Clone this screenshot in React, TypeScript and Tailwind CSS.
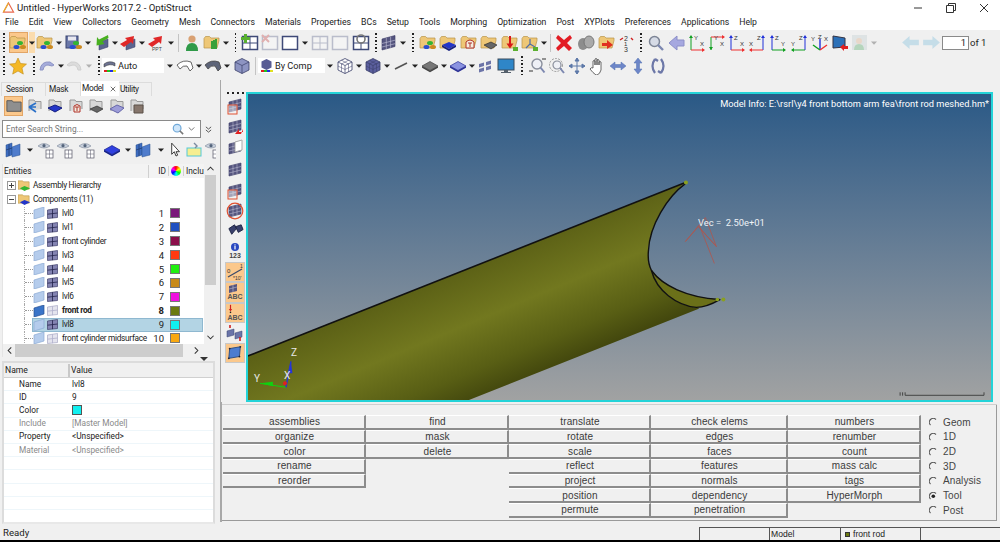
import React from "react";

// small helpers for the toolbar glyphs
const Grip = () => (
  <span className="flex flex-col gap-[2px] h-[19px] justify-center">
    {[0, 1, 2, 3, 4, 5].map((i) => (
      <i key={i} className="block w-[1.5px] h-[1.5px] bg-[#222]" />
    ))}
  </span>
);

const Caret = () => (
  <svg viewBox="0 0 6 4" className="w-[6px] h-[4px] shrink-0">
    <path d="M0 0.5h6L3 3.8z" fill="#222" />
  </svg>
);

const Sep = () => <span className="block w-px h-[18px] bg-[#c4c4c4]" />;

const Ic: React.FC<{ children: React.ReactNode; op?: boolean }> = ({ children, op }) => (
  <svg viewBox="0 0 18 18" className={op ? "w-[18px] h-[18px] shrink-0 opacity-30" : "w-[18px] h-[18px] shrink-0"}>
    {children}
  </svg>
);

const FolderShape = () => (
  <path d="M1 4.5V14h13l2-7.5V4H8L6.5 2.5H2.5z" fill="#eec777" stroke="#b79449" strokeWidth=".7" />
);

const Balls = () => (
  <>
    <ellipse cx="11" cy="9" rx="3" ry="2" fill="#33b533" />
    <ellipse cx="7.5" cy="13" rx="3" ry="2" fill="#2a4fd0" />
    <ellipse cx="14" cy="13" rx="3" ry="2" fill="#cc8a22" />
  </>
);

const FolderBalls = () => (
  <Ic>
    <FolderShape />
    <Balls />
  </Ic>
);

const FolderBlue = () => (
  <Ic>
    <FolderShape />
    <path d="M3 11l7-3 7 3-7 4z" fill="#2436c8" />
    <path d="M3 11v2l7 4 7-4v-2l-7 4z" fill="#141f80" />
  </Ic>
);

const FolderMark: React.FC<{ kind: string }> = ({ kind }) => (
  <Ic>
    <FolderShape />
    {kind === "clock" && <path d="M6 14V8q4-4 8 0v6zM8 9h4M10 9v4" fill="#f3ede0" stroke="#b03028" />}
    {kind === "gray" && <path d="M4 11l7-3 6 3-6 4z" fill="#666" stroke="#222" strokeWidth=".6" />}
    {kind === "down" && (
      <>
        <path d="M9 2v9" stroke="#d81818" strokeWidth="2" />
        <path d="M5.5 9.5h7L9 14.5z" fill="#d81818" />
        <rect x="12" y="13" width="5" height="4" fill="#5cb030" />
      </>
    )}
    {kind === "axis" && (
      <>
        <path d="M9 5v5l-4 4M9 10l5 3" stroke="#4e6ea8" strokeWidth="1.2" fill="none" />
        <rect x="12" y="13" width="5" height="4" fill="#5cb030" />
      </>
    )}
    {kind === "red" && <path d="M4 9h5V6l6 5-6 4v-3H4z" fill="#e03020" />}
    {kind === "color" && <path d="M8 7h2v8H8zM10 6h2v9h-2zM12 5h2v10h-2z" fill="#3aa03a" />}
  </Ic>
);

const MeshPanel: React.FC<{ op?: boolean }> = ({ op }) => (
  <Ic op={op}>
    <path d="M2 5l13-3.5v11L2 16z" fill="#55557f" stroke="#3b3b66" strokeWidth=".6" />
    <path d="M6.3 3.9v11M10.6 2.7v11M2 9.5l13-3.3M2 13l13-3.3" stroke="#c8c8dd" strokeWidth=".6" />
  </Ic>
);

const Arrow: React.FC<{ fill: string; ppt?: boolean; down?: boolean }> = ({ fill, ppt, down }) => (
  <Ic>
    {!ppt && <path d="M7 8l9-3v8l-9 3z" fill="#5b6490" stroke="#384068" strokeWidth=".5" />}
    {down ? (
      <path d="M16 1L7 5.5 5 3l-.5 8.5 8-1.5-2-2.5 6-3.5z" fill={fill} />
    ) : (
      <path d="M1 10l7-4-2-2 9-2-1 8-2-2-7 5z" fill={fill} />
    )}
    {ppt && (
      <text x="5" y="17" fontSize="5" fontFamily="Liberation Sans, sans-serif" fill="#444">
        PPT
      </text>
    )}
  </Ic>
);

const PanelBox: React.FC<{ op?: boolean; sym?: string }> = ({ op, sym }) => (
  <Ic op={op}>
    <rect x="1.5" y="2.5" width="15" height="13" fill="#fff" stroke="#3f4a78" strokeWidth="1.5" />
    {sym === "split" && <path d="M9 3v12M2 9h14" stroke="#3f4a78" />}
    {sym === "plus" && (
      <>
        <path d="M9 3v12M2 9h14" stroke="#3f4a78" />
        <path d="M3 0h3v3h3v3H6v3H3V6H0V3h3z" fill="#58b030" />
      </>
    )}
    {sym === "x" && <path d="M1 1l7 7M8 1l-7 7" stroke="#c02020" strokeWidth="2" />}
    {sym === "help" && (
      <>
        <path d="M9 9v7M2 9h14" stroke="#3f4a78" />
        <circle cx="9" cy="5" r="4" fill="none" stroke="#777" strokeWidth="1.6" />
      </>
    )}
  </Ic>
);

const AxisIcon: React.FC<{ v: string; h: string; vc: string; hc: string; flip?: boolean; down?: boolean }> = ({
  v,
  h,
  vc,
  hc,
  flip,
  down,
}) => {
  const x = flip ? 15 : 3;
  const x2 = flip ? 2 : 16;
  return (
    <svg viewBox="0 0 18 18" className="w-[18px] h-[18px] shrink-0">
      <path d={`M${x} ${down ? 3 : 16}V${down ? 16 : 3}`} stroke={vc} strokeWidth="1" />
      <path d={down ? `M${x - 2} 13h4l-2 3z` : `M${x - 2} 4h4l-2-3z`} fill={vc} />
      <path d={`M${x} ${down ? 3 : 16}H${x2}`} stroke={hc} strokeWidth="1" />
      <path d={flip ? `M4 ${down ? 1 : 14}v4l-3-2z` : `M14 ${down ? 1 : 14}v4l3-2z`} fill={hc} />
      <text x={flip ? 9 : 6} y="6" fontSize="6" fontFamily="Liberation Sans, sans-serif" fill="#333">
        {v}
      </text>
      <text x={flip ? 1 : 12} y="12" fontSize="6" fontFamily="Liberation Sans, sans-serif" fill="#333">
        {h}
      </text>
    </svg>
  );
};

const S: React.FC<{ w: string; children?: React.ReactNode }> = ({ w, children }) => (
  <span className={`${w} h-full shrink-0 flex items-center justify-center`}>{children}</span>
);

const Cube: React.FC<{ fill?: string; line?: boolean }> = ({ fill = "#7f88b8", line }) => (
  <Ic>
    <path d="M9 1.5l7 3.5v8l-7 3.5L2 13V5z" fill={fill} stroke="#3a3f68" strokeWidth=".8" />
    <path d="M2 5l7 3.5L16 5M9 8.5v8" fill="none" stroke="#3a3f68" strokeWidth=".7" />
    {line && <path d="M5.5 3.2L12.5 7M12.5 3.2L5.5 7M5.5 6.8v8M12.5 6.8v8M2 9l7 3.5L16 9" fill="none" stroke="#3a3f68" strokeWidth=".5" />}
  </Ic>
);

const Diamond: React.FC<{ fill: string; dark: string }> = ({ fill, dark }) => (
  <Ic>
    <path d="M1 9l8-4.5L17 9l-8 4.5z" fill={fill} stroke={dark} strokeWidth=".7" />
    <path d="M1 9v1.8l8 4.5 8-4.5V9l-8 4.5z" fill={dark} />
  </Ic>
);

const Shell: React.FC<{ fill: string }> = ({ fill }) => (
  <Ic>
    <path d="M1 8q6-6 14-3l2 6-3 3-3-5q-4-1-7 3z" fill={fill} stroke="#444" strokeWidth=".8" />
  </Ic>
);

const ToolRowOne = () => (
  <div className="h-[23px] flex items-center">
    <S w="w-[8px]"><Grip /></S>
    <S w="w-[20px]">
      <span className="w-[19px] h-[21px] bg-[#fbc88c] border border-[#e2a566] flex items-center justify-center">
        <FolderBalls />
      </span>
    </S>
    <S w="w-[8px]"><span className="w-[6px] h-[21px] bg-[#fbdcae] flex items-center justify-center"><Caret /></span></S>
    <S w="w-[18px]"><FolderBalls /></S>
    <S w="w-[10px]"><Caret /></S>
    <S w="w-[19px]">
      <Ic>
        <rect x="1" y="2" width="12" height="12" fill="#6b78a8" stroke="#3b4470" />
        <rect x="3" y="2.5" width="8" height="4" fill="#e8e8f0" />
        <Balls />
      </Ic>
    </S>
    <S w="w-[9px]"><Caret /></S>
    <S w="w-[18px]"><Arrow fill="#48b020" down /></S>
    <S w="w-[9px]"><Caret /></S>
    <S w="w-[18px]"><Arrow fill="#e02828" /></S>
    <S w="w-[10px]"><Caret /></S>
    <S w="w-[18px]"><Arrow fill="#e02828" ppt /></S>
    <S w="w-[11px]"><Caret /></S>
    <S w="w-[5px]"><Sep /></S>
    <S w="w-[22px]">
      <Ic>
        <circle cx="9" cy="5" r="3.6" fill="#d9a173" />
        <path d="M3 17q0-8 6-8t6 8z" fill="#2f9a48" />
      </Ic>
    </S>
    <S w="w-[18px]"><FolderMark kind="color" /></S>
    <S w="w-[10px]"><Caret /></S>
    <S w="w-[9px]"><Grip /></S>
    <S w="w-[20px]"><PanelBox sym="plus" /></S>
    <S w="w-[20px]"><PanelBox op sym="x" /></S>
    <S w="w-[20px]"><PanelBox /></S>
    <S w="w-[10px]"><Caret /></S>
    <S w="w-[20px]"><PanelBox op sym="split" /></S>
    <S w="w-[20px]"><PanelBox op /></S>
    <S w="w-[22px]"><PanelBox sym="help" /></S>
    <S w="w-[8px]"><Grip /></S>
    <S w="w-[18px]"><MeshPanel /></S>
    <S w="w-[10px]"><Caret /></S>
    <S w="w-[10px]"><Grip /></S>
    <S w="w-[20px]"><FolderBalls /></S>
    <S w="w-[20px]"><FolderBlue /></S>
    <S w="w-[21px]"><FolderMark kind="clock" /></S>
    <S w="w-[20px]"><FolderMark kind="gray" /></S>
    <S w="w-[21px]"><FolderMark kind="down" /></S>
    <S w="w-[20px]"><FolderMark kind="axis" /></S>
    <S w="w-[7px]"><Caret /></S>
    <S w="w-[6px]"><Sep /></S>
    <S w="w-[22px]">
      <Ic><path d="M3 1l6 5 6-5 2 3-5 5 5 5-3 3-5-5-6 5-2-3 5-5-5-5z" fill="#e21c24" /></Ic>
    </S>
    <S w="w-[21px]">
      <Ic>
        <ellipse cx="6" cy="10" rx="5" ry="6" fill="#8d8d8d" />
        <ellipse cx="12" cy="8" rx="5" ry="6" fill="#a9a9a9" stroke="#777" />
      </Ic>
    </S>
    <S w="w-[22px]"><FolderMark kind="red" /></S>
    <S w="w-[18px]">
      <svg viewBox="0 0 18 18" className="w-[18px] h-[18px] shrink-0">
        <text x="6" y="7" fontSize="7" fontFamily="Liberation Sans, sans-serif" fill="#333">2</text>
        <text x="6" y="12" fontSize="6" fontFamily="Liberation Sans, sans-serif" fill="#333">1</text>
        <text x="6" y="18" fontSize="7" fontFamily="Liberation Sans, sans-serif" fill="#333">3</text>
        <path d="M2 6l3-2M15 6l-2-2" stroke="#d02020" strokeWidth="1.4" />
      </svg>
    </S>
    <S w="w-[10px]"><Grip /></S>
    <S w="w-[20px]">
      <Ic>
        <circle cx="7.5" cy="7.5" r="5" fill="#d6dbe6" stroke="#7d8596" strokeWidth="1.5" />
        <path d="M11 11l5 5" stroke="#7d88b0" strokeWidth="2.4" />
      </Ic>
    </S>
    <S w="w-[21px]">
      <Ic><path d="M1 9l8-7v4h7v6H9v4z" fill="#a6a8e0" stroke="#8c8fc8" /></Ic>
    </S>
    <S w="w-[20px]"><AxisIcon v="Y" h="X" vc="#10a020" hc="#ee3030" /></S>
    <S w="w-[20px]"><AxisIcon v="Y" h="X" vc="#10a020" hc="#ee3030" down /></S>
    <S w="w-[20px]"><AxisIcon v="Z" h="X" vc="#2030d8" hc="#ee3030" /></S>
    <S w="w-[20px]"><AxisIcon v="Z" h="X" vc="#2030d8" hc="#ee3030" flip /></S>
    <S w="w-[21px]"><AxisIcon v="Z" h="Y" vc="#2030d8" hc="#10a020" /></S>
    <S w="w-[21px]"><AxisIcon v="Z" h="Y" vc="#2030d8" hc="#10a020" flip /></S>
    <S w="w-[21px]">
      <svg viewBox="0 0 18 18" className="w-[18px] h-[18px] shrink-0">
        <path d="M9 5v11" stroke="#2030d8" strokeWidth="1.4" />
        <path d="M2 11l7 5" stroke="#10a020" strokeWidth="1.4" />
        <path d="M16 11l-7 5" stroke="#ee3030" strokeWidth="1.4" />
        <text x="0" y="7" fontSize="6" fontFamily="Liberation Sans, sans-serif" fill="#333">Y</text>
        <text x="7" y="5" fontSize="6" fontFamily="Liberation Sans, sans-serif" fill="#333">Z</text>
        <text x="13" y="7" fontSize="6" fontFamily="Liberation Sans, sans-serif" fill="#333">X</text>
      </svg>
    </S>
    <S w="w-[20px]">
      <Ic>
        <path d="M2 2l12 2v9L2 14z" fill="#2c70b8" stroke="#334" />
        <path d="M9 13l4-3v2h4v3h-4v2z" fill="#e02020" />
      </Ic>
    </S>
    <S w="w-[20px]">
      <Ic op>
        <rect x="1" y="1" width="15" height="15" fill="#b7c7c9" />
        <circle cx="8" cy="7" r="3" fill="#d9a173" />
        <path d="M3 16q0-6 5-6t5 6z" fill="#2f9a48" />
      </Ic>
    </S>
    <S w="w-[8px]"><span className="opacity-30"><Caret /></span></S>
    <S w="w-[21px]" />
    <S w="w-[22px]">
      <svg viewBox="0 0 18 14" className="w-[17px] h-[13px]"><path d="M0 7l8-7v4h10v6H8v4z" fill="#c5dde8" /></svg>
    </S>
    <S w="w-[20px]">
      <svg viewBox="0 0 18 14" className="w-[17px] h-[13px]"><path d="M18 7l-8-7v4H0v6h10v4z" fill="#c5dde8" /></svg>
    </S>
    <span className="ml-[1px] w-[27px] h-[14px] bg-white border border-[#8a8a8a] text-right pr-[2px] leading-[12px] text-[9.5px]">1</span>
    <span className="ml-[1px] whitespace-nowrap text-[9.5px]">of 1</span>
  </div>
);

const ToolRowTwo = () => (
  <div className="h-[23px] flex items-center text-[9.2px]">
    <S w="w-[8px]"><Grip /></S>
    <S w="w-[20px]">
      <Ic><path d="M9 1l2.5 5.5 6 .6-4.5 4 1.3 6L9 14l-5.3 3.1 1.3-6L.5 7.1l6-.6z" fill="#f4b826" stroke="#c08a12" strokeWidth=".6" /></Ic>
    </S>
    <S w="w-[3px]" />
    <S w="w-[6px]"><Grip /></S>
    <S w="w-[20px]">
      <Ic><path d="M2 13q1-9 10-8l4 3-2 1-4-1q-4 0-5 5z" fill="#a5acdb" stroke="#8c93c4" /></Ic>
    </S>
    <S w="w-[7px]"><Caret /></S>
    <S w="w-[20px]">
      <span className="opacity-40">
        <Ic><path d="M16 13q-1-9-10-8L2 8l2 1 4-1q4 0 5 5z" fill="#c0c0c0" stroke="#a0a0a0" /></Ic>
      </span>
    </S>
    <S w="w-[10px]"><span className="opacity-30"><Caret /></span></S>
    <S w="w-[2px]" />
    <S w="w-[6px]"><Grip /></S>
    <span className="w-[62px] h-[15px] bg-white flex items-center shrink-0 pl-px">
      <svg viewBox="0 0 13 13" className="w-[13px] h-[13px] shrink-0">
        <path d="M1 5q5-4 11-1v3q-5-3-11 1z" fill="#6c7290" stroke="#333" strokeWidth=".5" />
        <path d="M1 11h3v2H1z" fill="#e02020" />
        <path d="M4 11h3v2H4z" fill="#20c020" />
        <path d="M7 11h3v2H7z" fill="#2030e0" />
        <path d="M10 11h3v2h-3z" fill="#e0e020" />
      </svg>
      <span className="ml-[2px]">Auto</span>
    </span>
    <S w="w-[11px]"><Caret /></S>
    <S w="w-[20px]"><Shell fill="#fff" /></S>
    <S w="w-[8px]"><Caret /></S>
    <S w="w-[20px]"><Shell fill="#5d6478" /></S>
    <S w="w-[8px]"><Caret /></S>
    <S w="w-[21px]"><Cube fill="#8d94c2" /></S>
    <S w="w-[6px]"><Sep /></S>
    <span className="w-[67px] h-[15px] bg-white flex items-center shrink-0 pl-[2px]">
      <svg viewBox="0 0 13 13" className="w-[13px] h-[13px] shrink-0">
        <path d="M6.5 0l5 2.5v6l-5 2.5-5-2.5v-6z" fill="#585c94" />
        <path d="M1 11h3v2H1z" fill="#e02020" />
        <path d="M4 11h3v2H4z" fill="#20c020" />
        <path d="M7 11h3v2H7z" fill="#2030e0" />
        <path d="M10 11h3v2h-3z" fill="#e0e020" />
      </svg>
      <span className="ml-[2px] whitespace-nowrap">By Comp</span>
    </span>
    <S w="w-[10px]"><Caret /></S>
    <S w="w-[20px]"><Cube fill="#fff" line /></S>
    <S w="w-[7px]"><Caret /></S>
    <S w="w-[22px]"><Cube fill="#5b5f9e" line /></S>
    <S w="w-[6px]"><Caret /></S>
    <S w="w-[22px]">
      <Ic><path d="M3 12L15 6" stroke="#555" strokeWidth="1.6" /></Ic>
    </S>
    <S w="w-[6px]"><Caret /></S>
    <S w="w-[23px]"><Diamond fill="#777" dark="#444" /></S>
    <S w="w-[6px]"><Caret /></S>
    <S w="w-[22px]"><Diamond fill="#8a92e0" dark="#2a3096" /></S>
    <S w="w-[6px]"><Caret /></S>
    <S w="w-[20px]">
      <Ic><path d="M3 7l5-1.5v3.5L3 10.5zM10 5l5-1.5V7l-5 1.5zM3 12l5-1.5V14l-5 1.5zM10 10l5-1.5V12l-5 1.5z" fill="#6c74a8" /></Ic>
    </S>
    <S w="w-[22px]">
      <svg viewBox="0 0 18 18" className="w-[18px] h-[18px] shrink-0">
        <rect x="1" y="2" width="16" height="11" fill="#2f86c8" stroke="#3a4a5a" />
        <path d="M7 13h4v2h3v1H4v-1h3z" fill="#55606c" />
      </svg>
    </S>
    <S w="w-[10px]"><Grip /></S>
    <S w="w-[20px]">
      <Ic>
        <circle cx="9" cy="7" r="5" fill="#eef0f6" stroke="#8a8f9c" strokeWidth="1.4" />
        <path d="M12.5 10.5l4 5" stroke="#7d88b0" strokeWidth="2" />
        <path d="M1 14h4M14 2h4" stroke="#333" />
      </Ic>
    </S>
    <S w="w-[20px]">
      <Ic>
        <circle cx="8" cy="8" r="6.5" fill="none" stroke="#999" strokeDasharray="2 1.2" />
        <circle cx="9" cy="8" r="4" fill="#eef0f6" stroke="#8a8f9c" strokeWidth="1.2" />
        <path d="M12 11l4 5" stroke="#7d88b0" strokeWidth="2" />
      </Ic>
    </S>
    <S w="w-[20px]">
      <Ic><path d="M9 1v16M1 9h16M9 1L7 4h4zM9 17l-2-3h4zM1 9l3-2v4zM17 9l-3-2v4z" fill="#5d78a8" stroke="#5d78a8" strokeWidth="1" /></Ic>
    </S>
    <S w="w-[20px]">
      <Ic><path d="M5 10V4q1-1 2 0v4-6q1-1 2 0v6-5q1-1 2 0v5-3q1-1 2 0v8q-1 4-4 5H8q-3-2-6-6 1-2 3-1z" fill="#fff" stroke="#444" strokeWidth=".8" /></Ic>
    </S>
    <S w="w-[22px]">
      <Ic><path d="M1 9l5-4v2.5h6V5l5 4-5 4v-2.5H6V13z" fill="#6d86c8" stroke="#5070b0" strokeWidth=".5" /></Ic>
    </S>
    <S w="w-[18px]">
      <Ic><path d="M9 1l4 5h-2.5v6H13l-4 5-4-5h2.5V6H5z" fill="#6d86c8" stroke="#5070b0" strokeWidth=".5" /></Ic>
    </S>
    <S w="w-[22px]">
      <Ic><path d="M6 2Q1 9 6 16M12 2q5 7 0 14M6 2l3 2M12 16l-3-2" fill="none" stroke="#6d78a8" strokeWidth="2.2" /></Ic>
    </S>
  </div>
);

const treeRows = [
  { n: "lvl0", id: 1, c: "bg-[#7a1a7a]" },
  { n: "lvl1", id: 2, c: "bg-[#2050c0]" },
  { n: "front cylinder", id: 3, c: "bg-[#8b0f4a]" },
  { n: "lvl3", id: 4, c: "bg-[#ff3a10]" },
  { n: "lvl4", id: 5, c: "bg-[#20f010]" },
  { n: "lvl5", id: 6, c: "bg-[#c88a18]" },
  { n: "lvl6", id: 7, c: "bg-[#f010e0]" },
  { n: "front rod", id: 8, c: "bg-[#6b7a10]", bold: true, faint: true, solid: true },
  { n: "lvl8", id: 9, c: "bg-[#10f0f0]", sel: true },
  { n: "front cylinder midsurface", id: 10, c: "bg-[#f8a810]", faint: true },
];

const LeftIcons = () => (
  <div className="h-[24px] pb-[4px] flex items-center pl-[4px] gap-[2.5px]">
    <span className="w-[19px] h-[20px] bg-[#fbc88c] border border-[#e2a566] flex items-center justify-center">
      <svg viewBox="0 0 18 18" className="w-[16px] h-[16px]">
        <path d="M1 3h6l1 1.5h9V15H1z" fill="#8f8f8f" stroke="#555" />
      </svg>
    </span>
    {["share", "blue", "clock", "gray", "mesh", "prop"].map((k) => (
      <span key={k} className="w-[18px] flex justify-center">
        <svg viewBox="0 0 18 18" className="w-[18px] h-[18px]">
          <path d="M3 14V3h5l1 1.5h6V12" fill="#d8d8d8" stroke="#999" />
          {k === "share" && <path d="M3 10l7-4M3 10l7 0M3 10l7 5" stroke="#2a70c8" strokeWidth="1.6" />}
          {k === "blue" && <path d="M2 11l7-3 7 3-7 4z" fill="#2436c8" stroke="#141f80" />}
          {k === "clock" && <path d="M7 15V9q3-3 6 0v6zM8 10h4M10 10v4" fill="#f3ede0" stroke="#b03028" />}
          {k === "gray" && <path d="M3 12l7-3 6 3-6 3.5z" fill="#666" stroke="#222" strokeWidth=".6" />}
          {k === "mesh" && <path d="M2 12l7-4 7 3-6 5z" fill="#9c9cd8" stroke="#6666aa" />}
          {k === "prop" && <path d="M6 8h9v8H6z" fill="#86766c" stroke="#5a5048" />}
        </svg>
      </span>
    ))}
  </div>
);

const Eye = () => (
  <svg viewBox="0 0 18 18" className="w-[18px] h-[18px] shrink-0">
    <path d="M1 5q6-5 12 0-6 4-12 0z" fill="#c8d0dc" stroke="#8892a4" strokeWidth=".7" />
    <circle cx="7" cy="4.7" r="1.6" fill="#55657c" />
    <rect x="9" y="9" width="7" height="8" fill="#fff" stroke="#556" strokeWidth=".7" />
    <path d="M9 13h7M12.5 9v8" stroke="#556" strokeWidth=".5" />
  </svg>
);

const PanelBlue = () => (
  <Ic>
    <path d="M2 4l6-2v12l-6 2z" fill="#3d6cc0" stroke="#28508f" strokeWidth=".5" />
    <path d="M8 6l8-3v11l-8 2z" fill="#4f7ccc" stroke="#28508f" strokeWidth=".5" />
    <path d="M5 3v12M2 9l6-2" stroke="#1f3a6a" strokeWidth=".7" />
  </Ic>
);

const LeftTools = () => (
  <div className="h-[24px] flex items-center overflow-hidden pl-[3px] shrink-0">
    <S w="w-[20px]"><PanelBlue /></S>
    <S w="w-[13px]"><Caret /></S>
    <S w="w-[19px]"><Eye /></S>
    <S w="w-[20px]"><Eye /></S>
    <S w="w-[24px]"><Eye /></S>
    <S w="w-[26px]"><Diamond fill="#3040e0" dark="#14208a" /></S>
    <S w="w-[5px]"><Caret /></S>
    <S w="w-[26px]"><PanelBlue /></S>
    <S w="w-[10px]"><Caret /></S>
    <S w="w-[20px]">
      <svg viewBox="0 0 14 18" className="w-[12px] h-[16px]"><path d="M2 1v13l3-3 2 5 2-1-2-4h4z" fill="#fff" stroke="#222" /></svg>
    </S>
    <S w="w-[18px]">
      <Ic>
        <rect x="1" y="7" width="14" height="8" fill="#f6ee90" stroke="#52c8d8" />
        <path d="M8 2l3 3-2 2" stroke="#7a8aa0" fill="none" strokeWidth="1.4" />
      </Ic>
    </S>
    <S w="w-[18px]"><Eye /></S>
  </div>
);

const TreePanel: React.FC<{ solid?: boolean }> = ({ solid }) => (
  <svg viewBox="0 0 12 12" className="w-[12px] h-[12px] shrink-0">
    <path d="M1 3l10-3v9L1 12z" fill={solid ? "#3a74c8" : "#b5ccec"} stroke={solid ? "#2a5090" : "#8caad4"} strokeWidth=".7" />
  </svg>
);

const TreeMesh: React.FC<{ faint?: boolean }> = ({ faint }) => (
  <svg viewBox="0 0 11 11" className="w-[11px] h-[11px] shrink-0">
    <path d="M.5 2L10.5.5v9L.5 10.5z" fill={faint ? "#e4e4ee" : "#8484b2"} stroke={faint ? "#a8a8c4" : "#3f3f6c"} strokeWidth=".7" />
    <path d="M5.5 1.2v9M.5 6.2L10.5 5" stroke={faint ? "#b0b0cc" : "#22224a"} strokeWidth=".8" />
  </svg>
);

const PlusBox: React.FC<{ minus?: boolean }> = ({ minus }) => (
  <svg viewBox="0 0 9 9" className="w-[9px] h-[9px] shrink-0">
    <rect x=".5" y=".5" width="8" height="8" fill="#fff" stroke="#999" />
    <path d={minus ? "M2 4.5h5" : "M2 4.5h5M4.5 2v5"} stroke="#444" />
  </svg>
);

const Ic2: React.FC<{ c: string }> = ({ c }) => (
  <svg viewBox="0 0 14 14" className="w-[13px] h-[13px] shrink-0">
    <path d="M0 2h5l1 1h6v8H0z" fill="#eec777" stroke="#b79449" strokeWidth=".6" />
    <path d="M2 10l5-2.5 6 2.5-6 3z" fill={c} />
  </svg>
);

const EntityTree = () => (
  <div className="h-[193px] mt-[2px] ml-[2px] flex flex-col bg-white border-l border-[#e4e4e4] relative overflow-hidden shrink-0">
    <div className="h-[14px] flex items-center bg-[#f3f3f3] shrink-0 pr-[12px]">
      <span className="pl-[1px] w-[145px]">Entities</span>
      <span className="w-[20px] text-right pr-[2px] border-l border-[#d0d0d0]">ID</span>
      <span className="w-[16px] flex justify-center border-l border-r border-[#d0d0d0]">
        <span className="w-[10px] h-[10px] rounded-full bg-[conic-gradient(#f00,#ff0,#0f0,#0ff,#00f,#f0f,#f00)]" />
      </span>
      <span className="pl-[2px] overflow-hidden whitespace-nowrap w-[20px]">Inclu</span>
    </div>
    <div className="h-[166px] overflow-hidden pr-[13px] shrink-0 tracking-[-0.3px]">
      <div className="h-[14px] flex items-center pl-[4px] gap-[2px]">
        <PlusBox />
        <Ic2 c="#33b533" />
        <span>Assembly Hierarchy</span>
      </div>
      <div className="h-[14.5px] flex items-center pl-[4px] gap-[2px]">
        <PlusBox minus />
        <Ic2 c="#2436c8" />
        <span>Components (11)</span>
      </div>
      {treeRows.map((r) => (
        <div key={r.id} className="h-[13.9px] flex items-center ml-[21px] border-l border-dotted border-[#aaa]">
          <span className="w-[8px] border-t border-dotted border-[#999]" />
          <span
            className={
              r.sel
                ? "flex items-center h-[14px] flex-1 bg-[#b3d4e4] border border-[#8fb8d0] -ml-[1px]"
                : "flex items-center h-[14px] flex-1"
            }
          >
            <TreePanel solid={r.solid} />
            <span className="w-[2px]" />
            <TreeMesh faint={r.faint} />
            <span className={r.bold ? "ml-[4px] font-bold w-[90px] whitespace-nowrap" : "ml-[4px] w-[90px] whitespace-nowrap"}>{r.n}</span>
            <span className={r.bold ? "w-[12px] text-right font-bold text-[9.5px] tracking-normal" : "w-[12px] text-right text-[9.5px] tracking-normal"}>{r.id}</span>
            <span className={`${r.c} ml-[6px] w-[10px] h-[10px] border border-[#777] shrink-0`} />
          </span>
        </div>
      ))}
    </div>
    {/* vertical scrollbar */}
    <div className="absolute right-0 top-0 w-[12px] h-[180px] bg-[#f0f0f0] flex flex-col items-center">
      <svg viewBox="0 0 8 5" className="w-[7px] h-[5px] mt-[2px] shrink-0"><path d="M.5 4.5L4 1l3.5 3.5" fill="none" stroke="#333" strokeWidth="1.2" /></svg>
      <span className="w-[11px] h-[110px] bg-[#cdcdcd] mt-[4px]" />
      <svg viewBox="0 0 8 5" className="w-[7px] h-[5px] mt-auto mb-[4px] shrink-0"><path d="M.5 .5L4 4l3.5-3.5" fill="none" stroke="#333" strokeWidth="1.2" /></svg>
    </div>
    {/* horizontal scrollbar */}
    <div className="absolute left-0 right-0 bottom-0 h-[13px] bg-[#f0f0f0] flex items-center justify-between pl-[4px] pr-[17px]">
      <svg viewBox="0 0 5 8" className="w-[5px] h-[7px]"><path d="M4.5 .5L1 4l3.5 3.5" fill="none" stroke="#333" strokeWidth="1.2" /></svg>
      <span className="absolute left-[12px] right-[33px] top-0 bottom-0 bg-[#cdcdcd]" />
      <svg viewBox="0 0 5 8" className="w-[5px] h-[7px]"><path d="M.5 .5L4 4 .5 7.5" fill="none" stroke="#333" strokeWidth="1.2" /></svg>
    </div>
  </div>
);

const props = [
  ["Name", "lvl8"],
  ["ID", "9"],
  ["Color", ""],
  ["Include", "[Master Model]", "g"],
  ["Property", "<Unspecified>"],
  ["Material", "<Unspecified>", "g"],
  ["", ""],
  ["", ""],
  ["", ""],
  ["", ""],
  ["", ""],
];

const PropTable = () => (
  <div className="ml-[2px] mr-[1px] h-[163px] border-2 border-[#dcdcdc] border-b-[#e8e8e8] bg-white overflow-hidden shrink-0">
    <div className="h-[15px] flex items-center bg-[#f0f0f0] border-b border-[#d0d0d0] text-[8.6px] pt-[1px]">
      <span className="w-[66px] pl-[1px] border-r-2 border-[#c8c8c8] h-full flex items-center">Name</span>
      <span className="pl-[1px]">Value</span>
    </div>
    {props.map(([k, v, g], i) => (
      <div key={i} className={g ? "h-[13.2px] flex items-center border-b border-[#eef6fa] text-[#8a8a8a]" : "h-[13.2px] flex items-center border-b border-[#eef6fa]"}>
        <span className="w-[66px] pl-[15px]">{k}</span>
        {k === "Color" ? (
          <span className="ml-[2px] w-[10px] h-[10px] bg-[#10f0f0] border border-[#555]" />
        ) : (
          <span className="ml-[2px]">{v}</span>
        )}
      </div>
    ))}
  </div>
);

const LeftPanel = () => (
  <div className="w-[216px] shrink-0 flex flex-col">
    <div className="h-[15px] flex items-end pl-[1px] mt-[1px] shrink-0 tracking-[-0.3px]">
      <span className="w-[45px] h-[14px] pl-[4px] bg-[#f0f0f0] border-t border-x border-[#dcdcdc]">Session</span>
      <span className="w-[35px] h-[14px] pl-[3px] bg-[#f0f0f0] border-t border-r border-[#dcdcdc]">Mask</span>
      <span className="w-[38px] h-[15px] pl-[1px] bg-white flex items-center justify-between pr-[3px]">
        Model
        <svg viewBox="0 0 8 8" className="w-[6px] h-[6px]"><path d="M1 1l6 6M7 1L1 7" stroke="#444" /></svg>
      </span>
      <span className="w-[33px] h-[14px] pl-[1px] bg-[#f0f0f0] border-t border-r border-[#dcdcdc]">Utility</span>
    </div>
    <LeftIcons />
    <div className="h-[18px] flex items-center pl-[2px] shrink-0">
      <div className="w-[199px] h-[18px] bg-white border border-[#8a8a8a] flex items-center justify-between pl-[3px] pr-[5px]">
        <span className="text-[#777]">Enter Search String...</span>
        <span className="flex items-center gap-[4px]">
          <svg viewBox="0 0 14 14" className="w-[12px] h-[12px]">
            <circle cx="6" cy="6" r="4.5" fill="#cfe6fa" stroke="#6fa8d8" strokeWidth="1.4" />
            <path d="M9 9l4 4" stroke="#777" strokeWidth="1.8" />
          </svg>
          <svg viewBox="0 0 8 5" className="w-[7px] h-[4px]"><path d="M.5 .5L4 4l3.5-3.5" fill="none" stroke="#555" /></svg>
        </span>
      </div>
      <svg viewBox="0 0 8 8" className="w-[7px] h-[7px] ml-[4px]"><path d="M1 1l3 2.5L7 1M1 4.5L4 7l3-2.5" fill="none" stroke="#444" /></svg>
    </div>
    <LeftTools />
    <EntityTree />
    <div className="h-[4px] flex justify-end pr-[8px] items-center shrink-0">
      <svg viewBox="0 0 8 4" className="w-[8px] h-[4px]"><path d="M0 0h8L4 4z" fill="#333" /></svg>
    </div>
    <PropTable />
  </div>
);

const StripGlyph: React.FC<{ mark?: string }> = ({ mark }) => (
  <svg viewBox="0 0 18 18" className="w-[18px] h-[18px]">
    <path d="M3 5l12-3v10L3 15z" fill="#55557f" stroke="#3b3b66" strokeWidth=".6" />
    <path d="M7 4v10M11 3v10M3 8.5l12-3M3 12l12-3" stroke="#c8c8dd" strokeWidth=".5" />
    {mark === "box" && <rect x="2" y="8" width="9" height="9" fill="#f4f4f4" fillOpacity=".5" stroke="#e05030" strokeWidth="1" />}
    {mark === "arrow" && <path d="M9 16l4-5v3h4v-3l-2 5z" fill="#e02020" />}
    {mark === "ghost" && <path d="M9 3l7-2v10l-7 2z" fill="#fff" stroke="#aaa" />}
    {mark === "circle" && <circle cx="9" cy="9" r="7.8" fill="none" stroke="#e05030" strokeWidth="1.2" />}
  </svg>
);

const Orange: React.FC<{ h: string; children: React.ReactNode }> = ({ h, children }) => (
  <span className={`w-[20px] ${h} bg-[#fbc88c] border border-[#c8c8c8] flex flex-col items-center justify-center shrink-0 overflow-hidden`}>
    {children}
  </span>
);

const LeftStrip = () => (
  <div className="w-[26px] shrink-0 border-l border-[#a8a8a8] ml-[4px] flex flex-col items-center pl-[3px]">
    <div className="h-[14px] flex items-end gap-[3px] shrink-0 pb-[1px] mt-[1px]">
      {[0, 1, 2, 3].map((i) => (
        <i key={i} className="block w-[2px] h-[2px] bg-[#222]" />
      ))}
    </div>
    <div className="flex flex-col items-center">
      <span className="h-[21px] flex items-center"><StripGlyph mark="box" /></span>
      <span className="h-[21px] flex items-center"><StripGlyph mark="arrow" /></span>
      <span className="h-[22px] flex items-center"><StripGlyph mark="ghost" /></span>
      <span className="h-[21px] flex items-center"><StripGlyph /></span>
      <span className="h-[21px] flex items-center"><StripGlyph mark="box" /></span>
      <span className="h-[19px] flex items-center"><StripGlyph mark="circle" /></span>
      <span className="h-[20px] flex items-center">
        <svg viewBox="0 0 18 18" className="w-[17px] h-[17px]">
          <path d="M2 7l6-4 2 4-5 6zM9 5l6-2 2 5-5 3z" fill="#39406c" stroke="#1f2545" />
        </svg>
      </span>
      <span className="h-[22px] flex flex-col items-center justify-center">
        <svg viewBox="0 0 8 8" className="w-[8px] h-[8px]"><circle cx="4" cy="4" r="4" fill="#2848c0" /><rect x="3.4" y="3" width="1.2" height="3.4" fill="#fff" /><rect x="3.4" y="1.4" width="1.2" height="1.1" fill="#fff" /></svg>
        <span className="text-[7px] leading-[9px] font-bold text-[#444] font-['Liberation_Sans',sans-serif]">123</span>
      </span>
      <Orange h="h-[20px]">
        <svg viewBox="0 0 18 18" className="w-[18px] h-[18px]">
          <path d="M2 14L16 6" stroke="#3a4a6a" strokeWidth="1.2" />
          <text x="1" y="10" fontSize="6" fontFamily="Liberation Sans, sans-serif" fill="#333">0</text>
          <text x="14" y="5" fontSize="5" fontFamily="Liberation Sans, sans-serif" fill="#333">1</text>
          <text x="7" y="17" fontSize="5" fontFamily="Liberation Sans, sans-serif" fill="#333">*10'</text>
        </svg>
      </Orange>
      <Orange h="h-[21px]">
        <svg viewBox="0 0 10 9" className="w-[10px] h-[9px] -ml-[4px]"><path d="M1 2l8-2v7l-8 2z" fill="#55557f" /><path d="M5 1v7M1 5l8-2" stroke="#ccd" strokeWidth=".5" /></svg>
        <span className="text-[7px] leading-[8px] font-bold text-[#555] font-['Liberation_Sans',sans-serif]">ABC</span>
      </Orange>
      <Orange h="h-[20px]">
        <svg viewBox="0 0 6 10" className="w-[5px] h-[10px] -ml-[10px]"><path d="M3 0v6" stroke="#d02020" strokeWidth="1.4" /><path d="M1 5h4L3 8z" fill="#d02020" /><circle cx="3" cy="9" r="1" fill="#222" /></svg>
        <span className="text-[7px] leading-[8px] font-bold text-[#555] font-['Liberation_Sans',sans-serif]">ABC</span>
      </Orange>
      <span className="h-[20px] flex items-center">
        <svg viewBox="0 0 18 18" className="w-[18px] h-[18px]">
          <path d="M1 7l7-2v6l-7 2zM9 9l7-2v6l-7 2z" fill="#6a74a8" stroke="#3b4470" strokeWidth=".5" />
          <path d="M4 1v3M14 13v4" stroke="#d02020" strokeWidth="1.6" />
        </svg>
      </span>
      <Orange h="h-[20px]">
        <svg viewBox="0 0 18 18" className="w-[16px] h-[16px]">
          <path d="M3 4l12-2-1 11-12 2z" fill="#4d7cd0" stroke="#26487e" />
          <circle cx="3" cy="4" r="1" fill="#223" /><circle cx="15" cy="2" r="1" fill="#223" /><circle cx="2" cy="15" r="1" fill="#223" /><circle cx="14" cy="13" r="1" fill="#223" />
        </svg>
      </Orange>
    </div>
  </div>
);

const Viewport = () => (
  <div className="flex-1 relative border-2 border-[#24d3d8] bg-linear-to-b from-[#2a5986] to-[#a1a2a2] overflow-hidden">
    <svg viewBox="248 94 744 305" className="absolute inset-0 w-full h-full">
      <defs>
        <linearGradient id="tube" gradientUnits="userSpaceOnUse" x1="450" y1="275" x2="500" y2="395">
          <stop offset="0" stopColor="#5c6116" />
          <stop offset=".4" stopColor="#72781f" />
          <stop offset=".75" stopColor="#585e14" />
          <stop offset="1" stopColor="#3f430c" />
        </linearGradient>
      </defs>
      <path
        d="M247 356L686 182C668 196 650 225 649 250C648 260 650 266 652 270C657 290 677 305 697 307L700 308L466 401H247Z"
        fill="url(#tube)"
      />
      <path d="M651 268C663 285 687 297 720 299C712 304 704 307 697 307C677 305 657 290 651 268Z" fill="#6b7019" />
      <path d="M247 356L686 182" stroke="#111" strokeWidth="1.6" fill="none" />
      <path d="M686 183C668 196 650 225 649 250C648 260 650 266 652 270C663 285 687 297 720 299" stroke="#111" strokeWidth="1.4" fill="none" />
      <path d="M652 270C657 290 677 305 697 307C706 307 714 303 721 299" stroke="#111" strokeWidth="1.4" fill="none" />
      <circle cx="686.5" cy="182" r="2" fill="#8aa020" />
      <circle cx="718" cy="299" r="1.8" fill="#8aa020" />
      <circle cx="724" cy="299" r="2" fill="#8aa020" />
      <path d="M686 241L706 217L717 246L699 226L686 241M699 226L717 246M700 225L715 263" stroke="#b0564c" strokeWidth=".8" fill="none" />
      <path d="M286 387L260 383" stroke="#10d010" strokeWidth="1" />
      <path d="M260 383L273 381.5V386Z" fill="#10d010" />
      <path d="M286 387L291 361" stroke="#2436d8" strokeWidth="1.4" />
      <path d="M291 361L288 373H292.5Z" fill="#2436d8" />
      <circle cx="285" cy="383" r="2" fill="#e02020" />
      <path d="M906 392V395H985V392" fill="none" stroke="#444" strokeWidth="1" />
      <path d="M901 392v3.4M903.5 392v3.4" stroke="#444" strokeWidth="1" />
    </svg>
    <span className="absolute right-[2px] top-[3px] text-white text-[9.25px] whitespace-nowrap">Model Info: E:\rsrl\y4 front bottom arm fea\front rod meshed.hm*</span>
    <span className="absolute left-[450px] top-[122px] text-[#eef2f6] text-[9.4px] whitespace-pre">Vec =  2.50e+01</span>
    <span className="absolute left-[43px] top-[252px] text-[#e8e8e8] text-[10px]">Z</span>
    <span className="absolute left-[6px] top-[278px] text-[#e8e8e8] text-[10px]">Y</span>
    <span className="absolute left-[36px] top-[275px] text-[#e8e8e8] text-[10px]">X</span>
  </div>
);

const col1 = ["assemblies", "organize", "color", "rename", "reorder"];
const col2 = ["find", "mask", "delete"];
const col3 = ["translate", "rotate", "scale", "reflect", "project", "position", "permute"];
const col4 = ["check elems", "edges", "faces", "features", "normals", "dependency", "penetration"];
const col5 = ["numbers", "renumber", "count", "mass calc", "tags", "HyperMorph"];
const radios = ["Geom", "1D", "2D", "3D", "Analysis", "Tool", "Post"];

const BtnCol: React.FC<{ items: string[]; w: string }> = ({ items, w }) => (
  <div className={`${w} shrink-0 flex flex-col`}>
    {items.map((t) => (
      <div key={t} className="h-[14.66px] flex items-center justify-center pl-[2px] border-b-2 border-r-2 border-[#8c8c8c] border-t border-t-white text-[#3a3a3a]">
        {t}
      </div>
    ))}
  </div>
);

const Radio: React.FC<{ on?: boolean }> = ({ on }) => (
  <svg viewBox="0 0 8 8" className="w-[8px] h-[8px] shrink-0">
    <path d="M7 1.5A3.4 3.4 0 0 0 1.5 7" fill="none" stroke="#555" strokeWidth="1.1" />
    {on && <circle cx="4.3" cy="4.3" r="1.8" fill="#222" />}
  </svg>
);

const BottomPanel = () => (
  <div className="h-[120px] shrink-0 border-l-2 border-[#a8a8a8] ml-[4px] mr-[3px] font-['Liberation_Sans',sans-serif] text-[10px] tracking-[0.1px]">
    <div className="border-t border-[#cfcfcf] mt-[2px]" />
    <div className="h-[116px] border-b border-[#9a9a9a] border-r flex pl-[1px] pt-[10px]">
      <BtnCol items={col1} w="w-[143px]" />
      <BtnCol items={col2} w="w-[143px]" />
      <BtnCol items={col3} w="w-[142px]" />
      <BtnCol items={col4} w="w-[137px]" />
      <BtnCol items={col5} w="w-[133px]" />
      <div className="flex-1 flex flex-col pl-[8px]">
        {radios.map((r) => (
          <div key={r} className="h-[14.66px] flex items-center gap-[6px] text-[#444] text-[10px]">
            <Radio on={r === "Tool"} />
            {r}
          </div>
        ))}
      </div>
    </div>
  </div>
);

const StatusBar = () => (
  <div className="h-[16px] flex items-end pl-[3px] font-['Liberation_Sans',sans-serif] text-[8.6px] relative shrink-0">
    <span className="font-['Roboto',sans-serif] text-[9.6px] self-center">Ready</span>
    <div className="ml-auto flex h-[13px]">
      <span className="w-[70px] border-l border-t border-[#555]" />
      <span className="w-[71px] border-l border-t border-[#555] leading-[12px] pl-[1px]">Model</span>
      <span className="w-[80px] border-l border-t border-[#555] flex items-center pl-[4px] gap-[3px]">
        <i className="block w-[5px] h-[5px] bg-[#6b7a10] border border-[#333]" />
        front rod
      </span>
      <span className="w-[80px] border-l border-t border-[#555]" />
    </div>
  </div>
);

export default function App() {
  return (
    <div className="w-[1000px] h-[542px] flex flex-col overflow-hidden bg-[#f0f0f0] text-[#222] text-[8.3px] leading-[13px] font-['Roboto',sans-serif]">
      <div className="h-[15px] bg-white flex items-center pl-[1px] shrink-0">
        <svg viewBox="0 0 14 14" className="w-[13px] h-[13px] mx-[1px]">
          <path d="M7 2L1.5 12h11z" fill="none" stroke="#e86a50" strokeWidth="1.2" />
          <path d="M1.5 12L7 2" stroke="#e8b030" strokeWidth="1.2" />
        </svg>
        <span className="ml-[1px] text-[9.6px]">Untitled - HyperWorks 2017.2 - OptiStruct</span>
        <div className="ml-auto flex">
          <span className="w-[33px] flex justify-center">
            <svg viewBox="0 0 10 10" className="w-[10px] h-[10px]"><path d="M1 5h8" stroke="#333" /></svg>
          </span>
          <span className="w-[33px] flex justify-center">
            <svg viewBox="0 0 10 10" className="w-[10px] h-[10px]"><path d="M.5 2.5h7v7h-7zM2.5 2.5v-2h7v7h-2" fill="none" stroke="#333" /></svg>
          </span>
          <span className="w-[33px] flex justify-center">
            <svg viewBox="0 0 10 10" className="w-[10px] h-[10px]"><path d="M1 1l8 8M9 1L1 9" stroke="#333" /></svg>
          </span>
        </div>
      </div>
      <div className="h-[15px] bg-white flex items-center pl-[5px] gap-[10px] shrink-0 whitespace-nowrap text-[8.7px]">
        {["File", "Edit", "View", "Collectors", "Geometry", "Mesh", "Connectors", "Materials", "Properties", "BCs", "Setup", "Tools", "Morphing", "Optimization", "Post", "XYPlots", "Preferences", "Applications", "Help"].map((m) => (
          <span key={m}>{m}</span>
        ))}
      </div>
      <div className="h-[50px] shrink-0 pt-[1px] flex flex-col">
        <ToolRowOne />
        <ToolRowTwo />
      </div>
      <div className="flex-1 flex min-h-0">
        <LeftPanel />
        <div className="flex-1 flex flex-col min-w-0">
          <div className="h-[322px] flex pr-[7px] shrink-0">
            <LeftStrip />
            <div className="flex-1 flex flex-col pt-[12px]">
              <Viewport />
            </div>
          </div>
          <BottomPanel />
        </div>
      </div>
      <StatusBar />
      <div className="h-[2px] bg-black shrink-0" />
    </div>
  );
}
